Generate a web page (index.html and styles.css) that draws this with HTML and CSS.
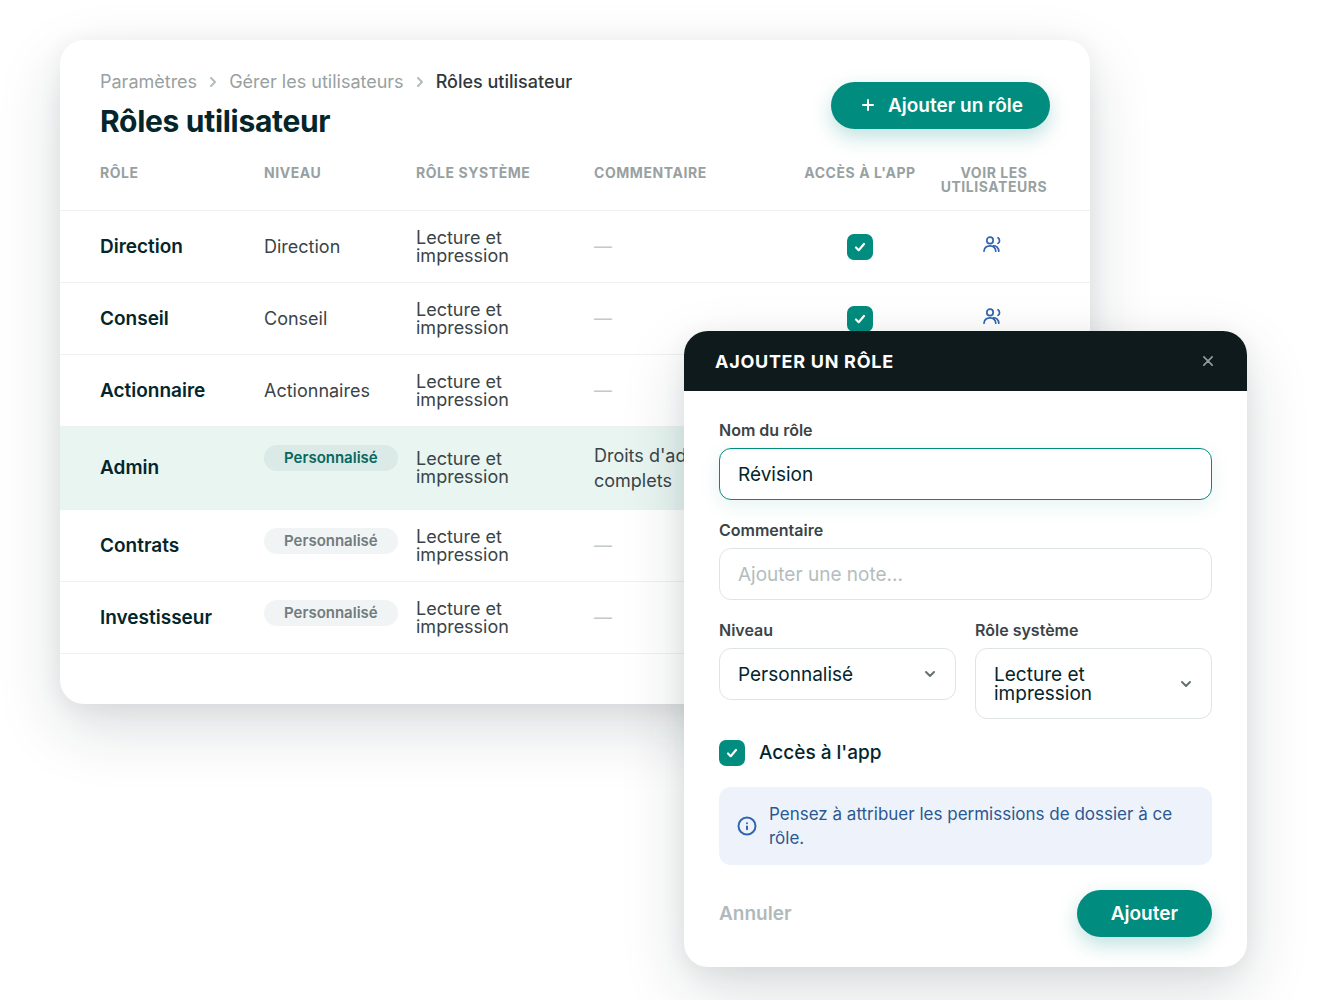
FILE: index.html
```html
<!DOCTYPE html>
<html lang="fr">
<head>
<meta charset="utf-8">
<meta name="viewport" content="width=device-width, initial-scale=1">
<title>Rôles utilisateur</title>
<link rel="stylesheet" href="styles.css">
</head>
<body>
<svg class="sprite" aria-hidden="true">
  <symbol id="i-users" viewBox="0 0 18 16">
    <circle cx="7" cy="4.400" r="3.200"/>
    <path d="M1 15.200c.3-3.400 2.700-5.400 6-5.400s5.500 2 5.800 5.400M10.400 9.800c3-.3 5.200 1.900 5.400 5.400M15 1.800c2 1.400 2.100 4.300 0 5.600"/>
  </symbol>
  <symbol id="i-chevron" viewBox="0 0 8 10"><path d="M2 1l4 4-4 4"/></symbol>
</svg>
<main class="stage">
  <section class="panel">
    <header class="panel-head">
      <div class="heading">
        <nav class="crumbs" aria-label="Fil d'Ariane">
          <a href="#">Paramètres</a>
          <svg class="crumb-sep"><use href="#i-chevron"/></svg>
          <a href="#">Gérer les utilisateurs</a>
          <svg class="crumb-sep"><use href="#i-chevron"/></svg>
          <a href="#" class="current" aria-current="page">Rôles utilisateur</a>
        </nav>
        <h1>Rôles utilisateur</h1>
      </div>
      <button type="button" class="btn btn-add">
        <svg class="plus" viewBox="0 0 12 12"><path d="M6 1v10M1 6h10"/></svg>
        Ajouter un rôle
      </button>
    </header>
    <table class="roles">
      <colgroup><col class="c-role"><col class="c-level"><col class="c-system"><col><col class="c-access"><col class="c-users"></colgroup>
      <thead>
        <tr><th>Rôle</th><th>Niveau</th><th>Rôle système</th><th>Commentaire</th><th class="mid">Accès à l'app</th><th class="mid last">Voir les utilisateurs</th></tr>
      </thead>
      <tbody>
        <tr><td class="name">Direction</td><td>Direction</td><td>Lecture et impression</td><td class="none">—</td><td class="mid"><input type="checkbox" class="check" aria-label="Accès à l'app, Direction" checked></td><td class="mid last"><a href="#" class="users" aria-label="Voir les utilisateurs"><svg><use href="#i-users"/></svg></a></td></tr>
        <tr><td class="name">Conseil</td><td>Conseil</td><td>Lecture et impression</td><td class="none">—</td><td class="mid"><input type="checkbox" class="check" aria-label="Accès à l'app, Conseil" checked></td><td class="mid last"><a href="#" class="users" aria-label="Voir les utilisateurs"><svg><use href="#i-users"/></svg></a></td></tr>
        <tr><td class="name">Actionnaire</td><td>Actionnaires</td><td>Lecture et impression</td><td class="none">—</td><td></td><td></td></tr>
        <tr class="active"><td class="name">Admin</td><td class="level"><span class="badge">Personnalisé</span></td><td>Lecture et impression</td><td class="note">Droits d'admin complets</td><td></td><td></td></tr>
        <tr><td class="name">Contrats</td><td class="level"><span class="badge">Personnalisé</span></td><td>Lecture et impression</td><td class="none">—</td><td></td><td></td></tr>
        <tr><td class="name">Investisseur</td><td class="level"><span class="badge">Personnalisé</span></td><td>Lecture et impression</td><td class="none">—</td><td></td><td></td></tr>
      </tbody>
    </table>
  </section>

  <form class="dialog" role="dialog" aria-labelledby="dialog-title">
    <header class="dialog-head">
      <h2 id="dialog-title">Ajouter un rôle</h2>
      <button type="button" class="close" aria-label="Fermer"><svg viewBox="0 0 12 12"><path d="M1 1l10 10M11 1L1 11"/></svg></button>
    </header>
    <div class="dialog-body">
      <div class="field">
        <label for="role-name">Nom du rôle</label>
        <input id="role-name" class="control focused" type="text" value="Révision">
      </div>
      <div class="field">
        <label for="role-note">Commentaire</label>
        <input id="role-note" class="control" type="text" placeholder="Ajouter une note...">
      </div>
      <div class="pair">
        <div class="field">
          <label for="role-level">Niveau</label>
          <select id="role-level" class="control"><option>Personnalisé</option></select>
        </div>
        <div class="field">
          <label for="role-system">Rôle système</label>
          <select id="role-system" class="control"><option>Lecture et impression</option></select>
        </div>
      </div>
      <label class="toggle"><input type="checkbox" class="check" checked>Accès à l'app</label>
      <div class="hint">
        <svg viewBox="0 0 20 20"><circle cx="10" cy="10" r="8.500"/><path d="M10 10.400v2.800M10 7.200v.1"/></svg>
        <p>Pensez à attribuer les permissions de dossier à ce rôle.</p>
      </div>
      <footer class="actions">
        <button type="button" class="cancel">Annuler</button>
        <button type="submit" class="btn">Ajouter</button>
      </footer>
    </div>
  </form>
</main>
</body>
</html>
```
FILE: styles.css
```css
:root {
  --teal: #008c7e;
  --ink: #04262b;
  --text: #3b4447;
  --muted: #98a1a1;
  --line: #edf1f1;
  --shadow: 0 24px 64px rgba(15, 35, 38, 0.15), 0 4px 24px rgba(15, 35, 38, 0.06);
}

* { box-sizing: border-box; }

body {
  margin: 0;
  background: #fff;
  color: var(--text);
  font-family: Inter, "Liberation Sans", sans-serif;
  font-size: 18px;
}

button, input, select { font: inherit; }
h1, h2, p { margin: 0; }
svg { fill: none; stroke: currentColor; stroke-linecap: round; stroke-linejoin: round; }
.sprite { position: absolute; width: 0; height: 0; }

.stage {
  position: relative;
  min-height: 100vh;
  padding: 40px 243px 33px 60px;
  overflow: hidden;
}

.panel {
  padding: 30px 0 50px;
  border-radius: 24px;
  background: #fff;
  box-shadow: var(--shadow);
}

.panel-head {
  display: flex;
  align-items: center;
  justify-content: space-between;
  padding: 0 40px;
}

.heading { display: grid; gap: 8px; }
.crumbs { display: flex; align-items: center; gap: 12px; line-height: 24px; }
.crumbs a { color: var(--muted); text-decoration: none; }
.crumbs .current { color: #30383b; font-weight: 500; }
.crumb-sep { width: 8px; height: 10px; color: #b4bcbc; stroke-width: 2; }
h1 { color: var(--ink); font-size: 30px; line-height: 38px; font-weight: 700; letter-spacing: -0.01em; }

.btn {
  display: flex;
  align-items: center;
  gap: 14px;
  height: 47px;
  padding: 0 34px;
  border: 0;
  border-radius: 24px;
  background: var(--teal);
  box-shadow: 0 8px 20px rgba(0, 140, 126, 0.25);
  color: #fff;
  font-size: 19px;
  font-weight: 600;
  white-space: nowrap;
}
.btn-add { padding: 0 27px 0 31px; }
.plus { width: 12px; height: 12px; stroke-width: 2; }

.roles { width: 100%; table-layout: fixed; border-collapse: separate; border-spacing: 0; }
.c-role { width: 204px; }
.c-level { width: 152px; }
.c-system { width: 178px; }
.c-access { width: 136px; }
.c-users { width: 162px; }

th {
  padding: 26px 0 16px;
  border-bottom: 1px solid var(--line);
  color: var(--muted);
  font-size: 14px;
  line-height: 14px;
  font-weight: 700;
  letter-spacing: 0.04em;
  text-align: left;
  text-transform: uppercase;
  vertical-align: top;
}
td {
  height: 72px;
  padding: 16px 36px 16px 0;
  border-bottom: 1px solid var(--line);
  line-height: 18px;
}
th:first-child, td:first-child { padding-left: 40px; }
td:first-child, td:nth-child(2) { padding-right: 0; }
th.mid, td.mid { padding-right: 0; text-align: center; }
th.last { padding-right: 30px; }
td.last { padding-right: 34px; }
.name { color: var(--ink); font-size: 19px; font-weight: 600; }
.none { color: #c3caca; }
.note { line-height: 25px; }
.level { padding-top: 18px; vertical-align: top; }
.active td { background: #e8f5f1; }

.badge {
  display: inline-block;
  padding: 0 20px;
  border-radius: 13px;
  background: #f1f4f4;
  color: #727b7d;
  font-size: 15px;
  line-height: 26px;
  font-weight: 600;
}
.active .badge { background: #dbeae6; color: #07675e; }

.check {
  appearance: none;
  display: block;
  flex: none;
  width: 26px;
  height: 26px;
  margin: 0;
  border-radius: 7px;
  background: #dde3e3;
}
.check:checked {
  background: var(--teal) url("data:image/svg+xml,%3Csvg xmlns='http://www.w3.org/2000/svg' width='12' height='10' fill='none' stroke='white' stroke-width='2.2' stroke-linecap='round' stroke-linejoin='round'%3E%3Cpath d='M2 5.500l2.700 2.700L10 2'/%3E%3C/svg%3E") center no-repeat;
}
td .check { margin: 0 auto; }
.users { display: block; padding-bottom: 6px; color: #2f66ad; }
.users svg { display: block; width: 18px; height: 16px; margin: 0 auto; stroke-width: 1.7; }

.dialog {
  position: absolute;
  top: 331px;
  right: 86px;
  width: 563px;
  overflow: hidden;
  border-radius: 24px;
  background: #fff;
  box-shadow: var(--shadow);
}
.dialog-head {
  display: flex;
  align-items: center;
  justify-content: space-between;
  height: 60px;
  padding: 0 34px 0 31px;
  background: #0f1a1c;
  color: #fff;
}
h2 { font-size: 18px; font-weight: 700; letter-spacing: 0.04em; text-transform: uppercase; }
.close { display: grid; padding: 0; border: 0; background: none; color: #929b9c; }
.close svg { width: 10px; height: 10px; stroke-width: 2; }

.dialog-body { display: grid; gap: 20px; padding: 29px 35px 30px; }
.field { display: grid; align-content: start; gap: 8px; min-width: 0; }
.field label { font-size: 16px; line-height: 20px; font-weight: 600; }
.pair { display: grid; grid-template-columns: 1fr 1fr; gap: 19px; }

.control {
  width: 100%;
  min-height: 52px;
  padding: 0 18px;
  border: 1px solid #dfe5e5;
  border-radius: 12px;
  outline: 0;
  background: #fff;
  color: var(--ink);
  font-size: 19px;
  line-height: 19px;
}
.control::placeholder { color: #b4bdbd; opacity: 1; }
.focused { border-color: var(--teal); box-shadow: 0 6px 20px rgba(0, 140, 126, 0.1); }
select.control {
  appearance: none;
  padding: 16px 80px 15px 18px;
  white-space: normal;
  background: #fff url("data:image/svg+xml,%3Csvg xmlns='http://www.w3.org/2000/svg' width='12' height='8' fill='none' stroke='%23677073' stroke-width='2' stroke-linecap='round' stroke-linejoin='round'%3E%3Cpath d='M2 2l4 4 4-4'/%3E%3C/svg%3E") right 19px center no-repeat;
}

.toggle { display: flex; align-items: center; gap: 14px; padding: 1px 0; color: var(--ink); font-size: 19px; font-weight: 500; line-height: 26px; }
.hint {
  display: flex;
  align-items: center;
  gap: 12px;
  padding: 15px 18px;
  border-radius: 12px;
  background: #eef3fb;
  color: #2b5891;
  font-size: 17px;
  line-height: 24px;
}
.hint svg { flex: none; width: 20px; height: 20px; color: #2f66ad; stroke-width: 2; }
.actions { display: flex; align-items: center; justify-content: space-between; padding-top: 5px; }
.cancel { padding: 0; border: 0; background: none; color: #b0baba; font-size: 19px; font-weight: 600; }
```
